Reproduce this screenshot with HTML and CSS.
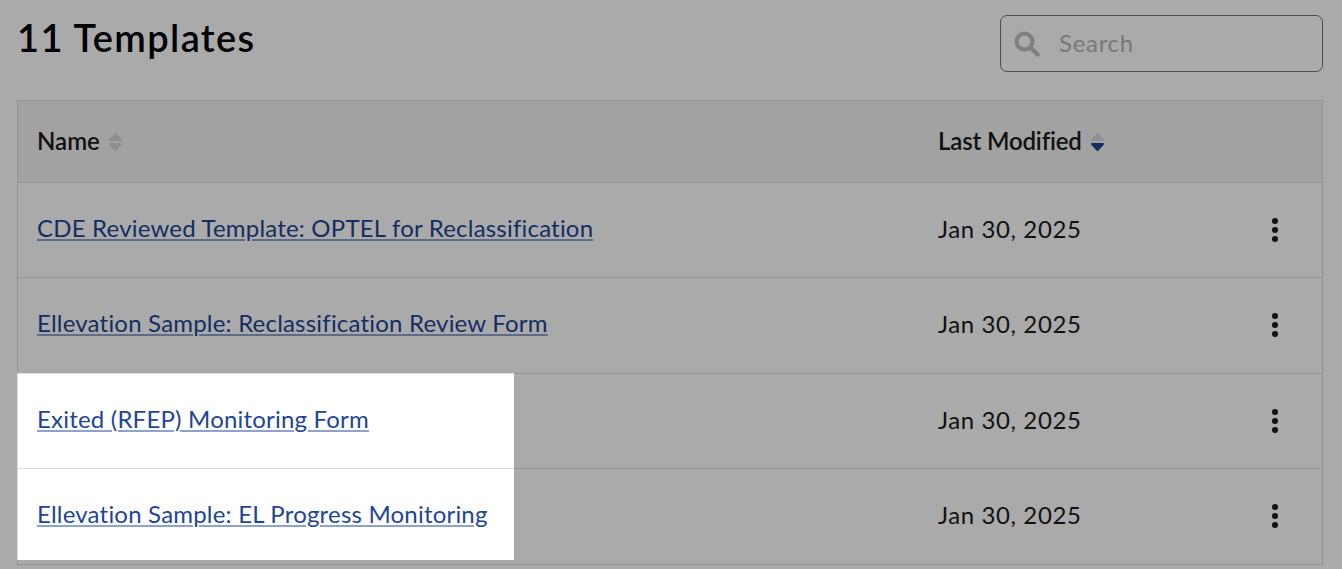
FILE: index.html
```html
<!DOCTYPE html>
<html lang="en">
<head>
    <meta charset="UTF-8">
    <meta name="viewport" content="width=device-width, initial-scale=1.0">
    <title>Templates</title>
    <link rel="stylesheet" href="styles.css">
</head>
<body>
    <div class="page">
        <header class="top">
            <h1 class="title">11 Templates</h1>
            <div class="search">
                <svg class="search-icon" viewBox="0 0 26 26" aria-hidden="true">
                    <circle cx="10.5" cy="10.5" r="8" fill="none" stroke="currentColor" stroke-width="4"/>
                    <path d="M16.5 16.5 L23.5 23.5" stroke="currentColor" stroke-width="4.4" stroke-linecap="round"/>
                </svg>
                <span class="search-text">Search</span>
            </div>
        </header>

        <div class="table">
            <div class="row head">
                <div class="cell-name">Name
                    <svg class="sort" viewBox="0 0 13 18" aria-hidden="true">
                        <path class="sort-up" d="M6.5 1 L12 7 H1 Z"/>
                        <path class="sort-down" d="M1 11 H12 L6.5 17 Z"/>
                    </svg>
                </div>
                <div class="cell-date">Last Modified
                    <svg class="sort" viewBox="0 0 13 18" aria-hidden="true">
                        <path class="sort-up" d="M6.5 1 L12 7 H1 Z"/>
                        <path class="sort-active" d="M1 11 H12 L6.5 17 Z"/>
                    </svg>
                </div>
                <div class="cell-menu"></div>
            </div>
            <div class="row">
                <div class="cell-name"><a href="#">CDE Reviewed Template: OPTEL for Reclassification</a></div>
                <div class="cell-date">Jan 30, 2025</div>
                <div class="cell-menu"><span class="dots"><i></i><i></i><i></i></span></div>
            </div>
            <div class="row">
                <div class="cell-name"><a href="#">Ellevation Sample: Reclassification Review Form</a></div>
                <div class="cell-date">Jan 30, 2025</div>
                <div class="cell-menu"><span class="dots"><i></i><i></i><i></i></span></div>
            </div>
            <div class="row">
                <div class="cell-name"><a href="#">Exited (RFEP) Monitoring Form</a></div>
                <div class="cell-date">Jan 30, 2025</div>
                <div class="cell-menu"><span class="dots"><i></i><i></i><i></i></span></div>
            </div>
            <div class="row">
                <div class="cell-name"><a href="#">Ellevation Sample: EL Progress Monitoring</a></div>
                <div class="cell-date">Jan 30, 2025</div>
                <div class="cell-menu"><span class="dots"><i></i><i></i><i></i></span></div>
            </div>
        </div>
    </div>

    <div class="spotlight"></div>
</body>
</html>
```

FILE: styles.css
```css
html, body {
    height: 100%;
    overflow: hidden;
}

body {
    margin: 0;
    background: #fff;
    color: #1a1a1a;
    font-family: 'Lato', 'Open Sans', sans-serif;
}

.page {
    padding: 15px 19px 0 17px;
}

.top {
    display: flex;
    justify-content: space-between;
    align-items: flex-start;
    height: 85px;
}

.title {
    margin: -2px 0 0;
    font-size: 38px;
    line-height: 48px;
    font-weight: 600;
    letter-spacing: 1.35px;
    color: #000;
}

.search {
    display: flex;
    align-items: center;
    box-sizing: border-box;
    width: 323px;
    height: 57px;
    padding-left: 13px;
    border: 1px solid #757575;
    border-radius: 7px;
    background: #fff;
}

.search-icon {
    width: 26px;
    height: 26px;
    color: #bdbdbd;
}

.search-text {
    margin: -3px 0 0 19px;
    font-size: 24px;
    letter-spacing: 0.7px;
    color: #b5b5b5;
}

.table {
    border: 1px solid #dcdcdc;
    border-bottom: 0;
}

.row {
    display: flex;
    align-items: center;
    box-sizing: border-box;
    height: 95.5px;
    padding: 0 22px 0 19px;
    border-bottom: 1px solid #dcdcdc;
    font-size: 24px;
}

.row.head {
    height: 81.5px;
    background: #f4f4f4;
    font-weight: 600;
}

.cell-name {
    flex: 1;
    padding-bottom: 5px;
}

.cell-date {
    width: 312px;
    padding-bottom: 3px;
    letter-spacing: 0.6px;
}

.head .cell-name, .head .cell-date {
    padding-bottom: 2px;
    letter-spacing: 0;
}

.head .cell-date {
    letter-spacing: -0.15px;
}

.cell-menu {
    width: 50px;
    display: flex;
    justify-content: center;
}

.cell-name a {
    color: #1f4596;
    letter-spacing: 0.2px;
    text-decoration-color: #8ea2cd;
    text-decoration-thickness: 1.5px;
    text-underline-offset: 2px;
}

.sort {
    width: 13px;
    height: 18px;
    margin-left: 3px;
    vertical-align: -1px;
}

.sort path {
    stroke-width: 2;
    stroke-linejoin: round;
}

.sort-up, .sort-down {
    fill: #d7d7d7;
    stroke: #d7d7d7;
}

.sort-active {
    fill: #1f4596;
    stroke: #1f4596;
}

.dots {
    display: flex;
    flex-direction: column;
    gap: 3px;
}

.dots i {
    width: 6px;
    height: 6px;
    border-radius: 50%;
    background: #1a1a1a;
}

/* dims everything except the highlighted rows */
.spotlight {
    position: absolute;
    left: 17px;
    top: 373px;
    width: 497px;
    height: 187px;
    box-shadow: 0 0 0 2000px rgba(0, 0, 0, 0.335);
}
```
